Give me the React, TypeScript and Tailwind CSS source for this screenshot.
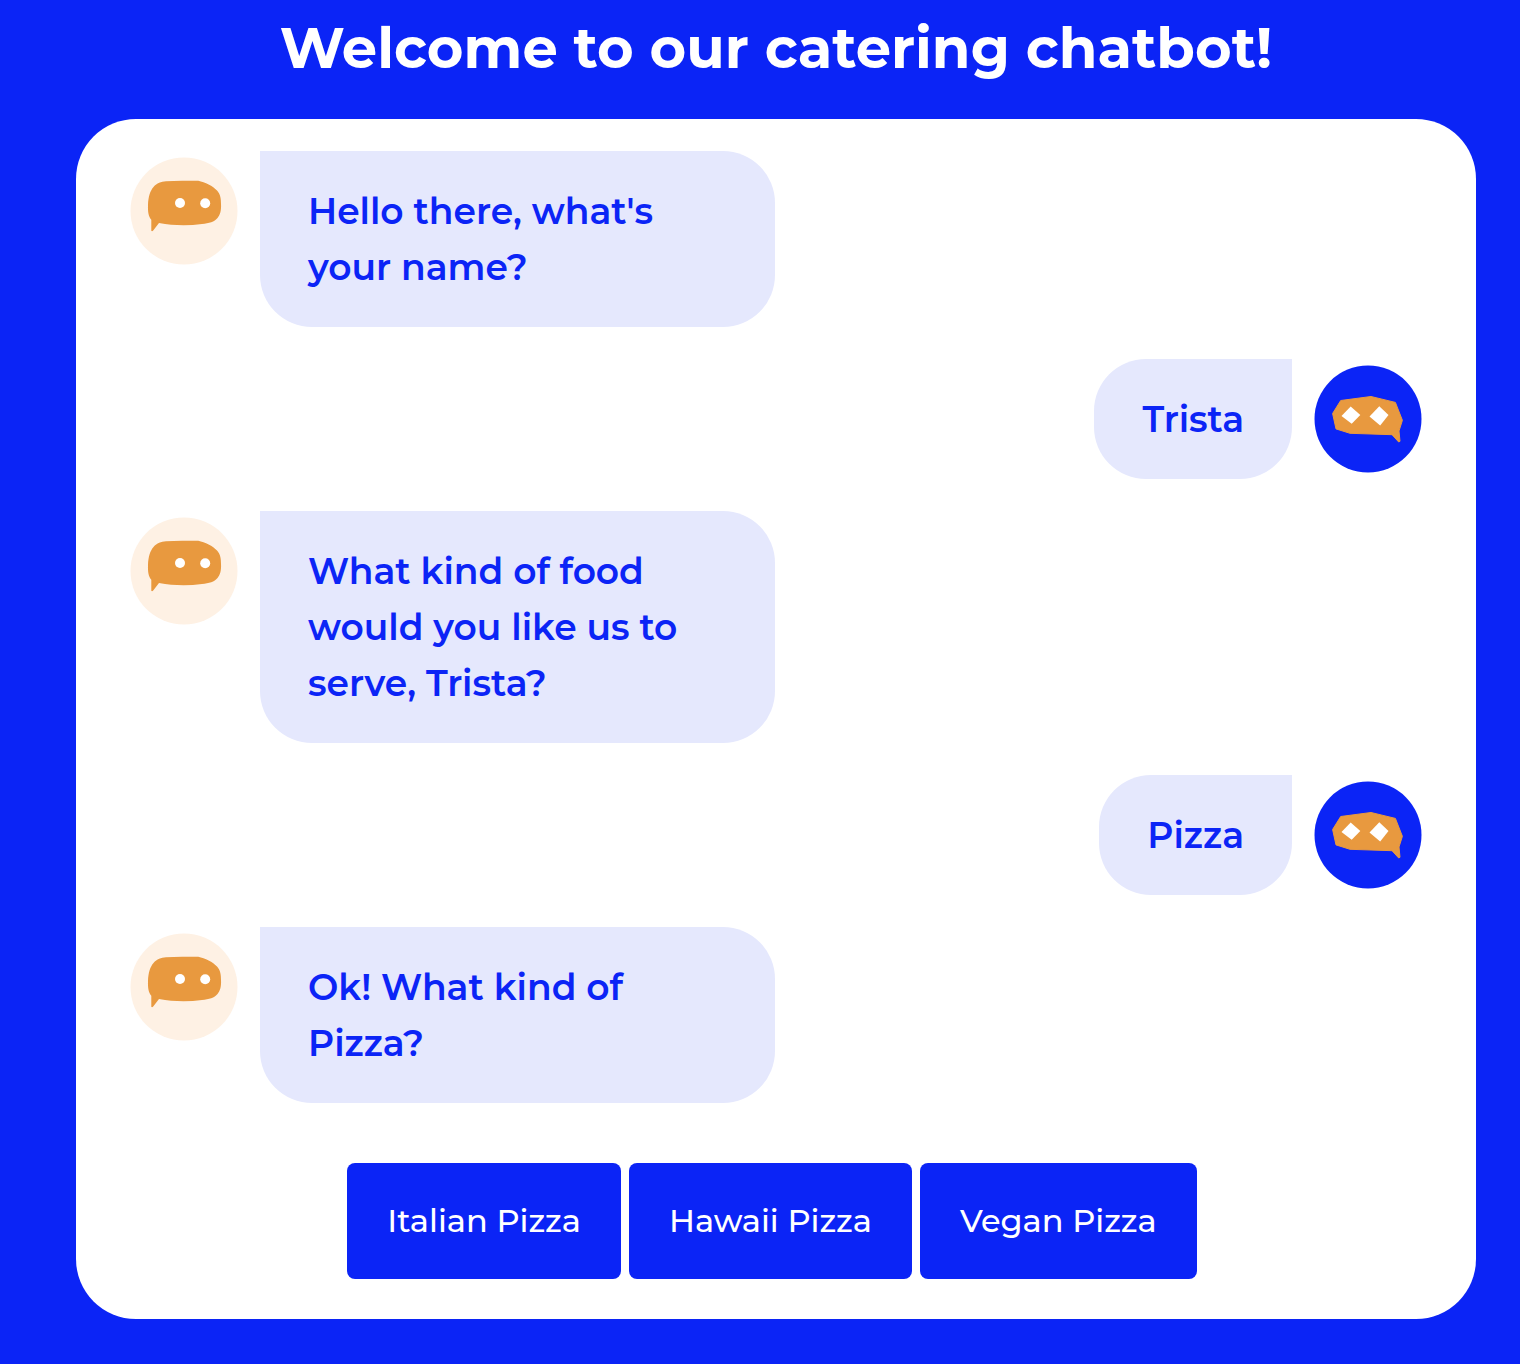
import type { ReactNode } from "react";

type Message = { from: "bot" | "user"; text: string };

const messages: Message[] = [
  { from: "bot", text: "Hello there, what's your name?" },
  { from: "user", text: "Trista" },
  { from: "bot", text: "What kind of food would you like us to serve, Trista?" },
  { from: "user", text: "Pizza" },
  { from: "bot", text: "Ok! What kind of Pizza?" },
];

const options = ["Italian Pizza", "Hawaii Pizza", "Vegan Pizza"];

function Avatar({ label, children }: { label: string; children: ReactNode }) {
  return (
    <svg role="img" aria-label={label} viewBox="0 0 108 108" className="mt-1.5 size-[108px] shrink-0">
      {children}
    </svg>
  );
}

function BotAvatar() {
  return (
    <Avatar label="Bot">
      <circle cx="54" cy="54" r="53.5" fill="#fef1e4" />
      <path
        fill="#e8993f"
        d="M18 48C18.3 40 20 34 23.5 30C27 26 31 24.7 36 24.3C46 23.6 58 23.8 68.3 23.7C75 25.2 83 29 87 33.5C90.5 37 91 42 91 47C91.4 54 90 58 87.5 61C84.5 65 79 66.2 72 67C58 68.8 43 68.6 29 66L23.2 73.6Q22 74.8 21.3 73.8V62.7C18.5 59.5 17.8 55 18 48Z"
      />
      <circle cx="50" cy="46" r="5" fill="#fff" />
      <circle cx="75.2" cy="46.2" r="5" fill="#fff" />
    </Avatar>
  );
}

function UserAvatar() {
  return (
    <Avatar label="User">
      <circle cx="54" cy="54" r="53.5" fill="#0b24f6" />
      <path
        fill="#e8993f"
        stroke="#e8993f"
        strokeLinejoin="round"
        d="M26.7 35.5L57 31.5L81.4 37.4L88.4 55.3L85 66L86 76.3L84.7 77L78 69.7L36 68.3L22 63.9L18.6 48.5Z"
      />
      <path fill="#fff" d="M36.7 41.5L46.3 50L37.7 58.8L27.5 51Z" />
      <path fill="#fff" d="M65.3 41.2L74.5 50L66.2 60.4L55.5 51.6Z" />
    </Avatar>
  );
}

function ChatRow({ message }: { message: Message }) {
  if (message.from === "bot") {
    return (
      <li className="flex items-start gap-[22px]">
        <BotAvatar />
        <p className="w-[515px] rounded-[52px] rounded-tl-none bg-[#e5e8fd] px-12 py-8">{message.text}</p>
      </li>
    );
  }
  return (
    <li className="flex items-start justify-end gap-[22px]">
      <p className="max-w-[515px] rounded-[52px] rounded-tr-none bg-[#e5e8fd] px-12 py-8">{message.text}</p>
      <UserAvatar />
    </li>
  );
}

export default function App() {
  return (
    <div className="min-h-screen bg-[#0b24f6] pr-11 pb-11 pl-[76px] font-['Montserrat','Inter',sans-serif]">
      <h1 className="pt-3 pb-[35px] text-center text-[56px] leading-[72px] font-bold text-white">
        Welcome to our catering chatbot!
      </h1>
      <main className="rounded-[60px] bg-white px-[54px] pt-8 pb-10">
        <ul className="flex flex-col gap-8 text-[36px] leading-[56px] font-semibold text-[#0b24f6]">
          {messages.map((message) => (
            <ChatRow key={message.text} message={message} />
          ))}
        </ul>
        <div className="mt-[60px] flex justify-center">
          {options.map((option) => (
            <button
              key={option}
              type="button"
              className="mr-2 rounded-lg bg-[#0b24f6] px-10 py-[38px] text-[32px] leading-10 font-medium text-white"
            >
              {option}
            </button>
          ))}
        </div>
      </main>
    </div>
  );
}
